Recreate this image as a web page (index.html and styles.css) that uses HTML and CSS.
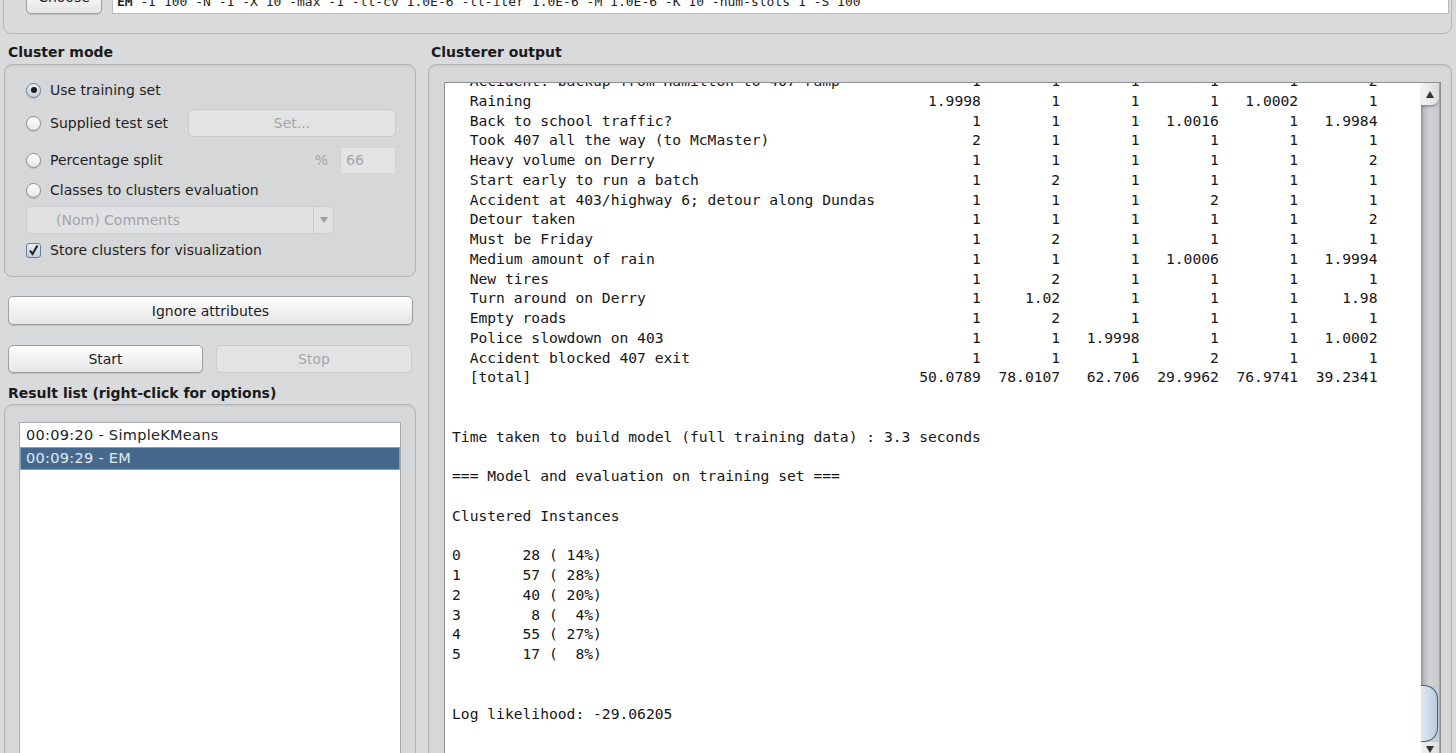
FILE: index.html
```html
<!DOCTYPE html>
<html>
<head>
<meta charset="utf-8">
<title>Weka Explorer - Cluster</title>
<link rel="stylesheet" href="styles.css">
</head>
<body>
<div class="app">
  <div class="topbox">
    <button class="btn choose">Choose</button>
    <div class="cmdfield"><b>EM</b> -I 100 -N -1 -X 10 -max -1 -ll-cv 1.0E-6 -ll-iter 1.0E-6 -M 1.0E-6 -K 10 -num-slots 1 -S 100</div>
  </div>
  <div class="main">
    <div class="left">
      <div class="title">Cluster mode</div>
      <div class="group mode">
        <div class="mrow r1"><span class="radio on"></span><span class="lbl">Use training set</span></div>
        <div class="mrow r2"><span class="opt"><span class="radio"></span><span class="lbl">Supplied test set</span></span><button class="btn dis setbtn">Set...</button></div>
        <div class="mrow r3"><span class="opt"><span class="radio"></span><span class="lbl">Percentage split</span></span><span class="pct"><span class="pctsign">%</span><span class="pctfield">66</span></span></div>
        <div class="mrow r4"><span class="radio"></span><span class="lbl">Classes to clusters evaluation</span></div>
        <div class="mrow r5"><div class="combo"><span class="combotext">(Nom) Comments</span><span class="comboarrow"><svg width="8" height="6" viewBox="0 0 8 6"><path d="M0 0 H8 L4 6 Z" fill="#9aa0a8"/></svg></span></div></div>
        <div class="mrow r6"><span class="check"><svg width="13" height="13" viewBox="0 0 13 13"><path d="M3 6.5 L5.5 10 L10.5 1.5" fill="none" stroke="#1c1c1c" stroke-width="2"/></svg></span><span class="lbl">Store clusters for visualization</span></div>
      </div>
      <button class="btn ignore">Ignore attributes</button>
      <div class="startstop">
        <button class="btn">Start</button>
        <button class="btn dis">Stop</button>
      </div>
      <div class="title rtitle">Result list (right-click for options)</div>
      <div class="group results">
        <div class="list">
          <div class="item">00:09:20 - SimpleKMeans</div>
          <div class="item sel">00:09:29 - EM</div>
        </div>
      </div>
    </div>
    <div class="right">
      <div class="title otitle">Clusterer output</div>
      <div class="group output">
        <div class="textarea">
          <div class="out">
            <div class="ln row"><span class="lab">Accident: backup from Hamilton to 407 ramp</span><span>1</span><span>1</span><span>1</span><span>1</span><span>1</span><span>2</span></div>
            <div class="ln row"><span class="lab">Raining</span><span>1.9998</span><span>1</span><span>1</span><span>1</span><span>1.0002</span><span>1</span></div>
            <div class="ln row"><span class="lab">Back to school traffic?</span><span>1</span><span>1</span><span>1</span><span>1.0016</span><span>1</span><span>1.9984</span></div>
            <div class="ln row"><span class="lab">Took 407 all the way (to McMaster)</span><span>2</span><span>1</span><span>1</span><span>1</span><span>1</span><span>1</span></div>
            <div class="ln row"><span class="lab">Heavy volume on Derry</span><span>1</span><span>1</span><span>1</span><span>1</span><span>1</span><span>2</span></div>
            <div class="ln row"><span class="lab">Start early to run a batch</span><span>1</span><span>2</span><span>1</span><span>1</span><span>1</span><span>1</span></div>
            <div class="ln row"><span class="lab">Accident at 403/highway 6; detour along Dundas</span><span>1</span><span>1</span><span>1</span><span>2</span><span>1</span><span>1</span></div>
            <div class="ln row"><span class="lab">Detour taken</span><span>1</span><span>1</span><span>1</span><span>1</span><span>1</span><span>2</span></div>
            <div class="ln row"><span class="lab">Must be Friday</span><span>1</span><span>2</span><span>1</span><span>1</span><span>1</span><span>1</span></div>
            <div class="ln row"><span class="lab">Medium amount of rain</span><span>1</span><span>1</span><span>1</span><span>1.0006</span><span>1</span><span>1.9994</span></div>
            <div class="ln row"><span class="lab">New tires</span><span>1</span><span>2</span><span>1</span><span>1</span><span>1</span><span>1</span></div>
            <div class="ln row"><span class="lab">Turn around on Derry</span><span>1</span><span>1.02</span><span>1</span><span>1</span><span>1</span><span>1.98</span></div>
            <div class="ln row"><span class="lab">Empty roads</span><span>1</span><span>2</span><span>1</span><span>1</span><span>1</span><span>1</span></div>
            <div class="ln row"><span class="lab">Police slowdown on 403</span><span>1</span><span>1</span><span>1.9998</span><span>1</span><span>1</span><span>1.0002</span></div>
            <div class="ln row"><span class="lab">Accident blocked 407 exit</span><span>1</span><span>1</span><span>1</span><span>2</span><span>1</span><span>1</span></div>
            <div class="ln row"><span class="lab">[total]</span><span>50.0789</span><span>78.0107</span><span>62.706</span><span>29.9962</span><span>76.9741</span><span>39.2341</span></div>
            <div class="ln"></div>
            <div class="ln"></div>
            <div class="ln">Time taken to build model (full training data) : 3.3 seconds</div>
            <div class="ln"></div>
            <div class="ln">=== Model and evaluation on training set ===</div>
            <div class="ln"></div>
            <div class="ln">Clustered Instances</div>
            <div class="ln"></div>
            <div class="ln">0       28 ( 14%)</div>
            <div class="ln">1       57 ( 28%)</div>
            <div class="ln">2       40 ( 20%)</div>
            <div class="ln">3        8 (  4%)</div>
            <div class="ln">4       55 ( 27%)</div>
            <div class="ln">5       17 (  8%)</div>
            <div class="ln"></div>
            <div class="ln"></div>
            <div class="ln">Log likelihood: -29.06205</div>
          </div>
          <div class="vscroll">
            <div class="sbtn up"><svg width="8" height="7" viewBox="0 0 8 7"><path d="M4 0 L8 7 H0 Z" fill="#333"/></svg></div>
            <div class="track">
              <div class="thumb"></div>
              <div class="sbtn down"><svg width="8" height="7" viewBox="0 0 8 7"><path d="M0 0 H8 L4 7 Z" fill="#333"/></svg></div>
            </div>
          </div>
        </div>
      </div>
    </div>
  </div>
</div>
</body>
</html>
```
FILE: styles.css
```css
* { box-sizing: border-box; }
html, body { margin: 0; padding: 0; }
body {
  background: #d9dadc;
  font-family: "DejaVu Sans", "Liberation Sans", sans-serif;
  font-size: 14px;
  color: #222;
}
.app {
  width: 1456px;
  height: 753px;
  overflow: hidden;
}
/* top options bar (scrolled partly out of view) */
.topbox {
  margin: -26px 4px 0 3px;
  height: 60px;
  border: 1px solid #b4b5b8;
  border-radius: 8px;
  display: flex;
  align-items: flex-end;
  gap: 10px;
  padding: 0 0 19px 22px;
}
.btn {
  font-family: "DejaVu Sans", "Liberation Sans", sans-serif;
  font-size: 14px;
  color: #1e1e1e;
  background: linear-gradient(#fefefe, #f1f1f1 50%, #e6e6e6);
  border: 1px solid #9e9ea0;
  border-radius: 5px;
  box-shadow: 0 1px 1px rgba(0,0,0,0.12);
  padding: 0;
  margin: 0;
}
.btn.dis {
  color: #a6a6a8;
  background: #e2e3e5;
  border-color: #cbcccf;
  box-shadow: none;
}
.choose {
  width: 76px;
  height: 28px;
  line-height: 14px;
  padding-bottom: 6px;
}
.cmdfield {
  flex: 1;
  height: 26px;
  background: #fff;
  border: 1px solid #b9babc;
  border-top: none;
  margin-right: 2px;
  padding: 7px 0 0 4px;
  font-family: "DejaVu Sans Mono", "Liberation Mono", monospace;
  font-size: 13px;
  line-height: 14px;
  white-space: nowrap;
  overflow: hidden;
  color: #1e1e1e;
}
.main {
  display: flex;
  gap: 12px;
  padding: 0 4px;
}
.left {
  width: 412px;
  display: flex;
  flex-direction: column;
}
.right {
  width: 1024px;
  display: flex;
  flex-direction: column;
}
.title {
  margin-top: 9px;
  height: 18px;
  line-height: 18px;
  font-weight: bold;
  font-size: 14px;
  padding-left: 4px;
  color: #1a1a1a;
}
.otitle { padding-left: 3px; }
.group {
  margin-top: 3px;
  border: 1px solid #b3b4b7;
  border-radius: 8px;
  background: #d6d7d9;
  box-shadow: inset 0 1px 2px rgba(0,0,0,0.08);
}
.mode {
  height: 213px;
  padding: 12px 19px 0 21px;
  display: flex;
  flex-direction: column;
}
.mrow {
  display: flex;
  align-items: center;
}
.r1 { height: 26px; }
.r2 { height: 28px; margin-top: 6px; justify-content: space-between; }
.r3 { height: 28px; margin-top: 9px; justify-content: space-between; }
.r4 { height: 24px; margin-top: 4px; }
.r5 { height: 28px; margin-top: 4px; }
.r6 { height: 22px; margin-top: 5px; }
.opt { display: flex; align-items: center; }
.lbl { margin-left: 9px; color: #1e1e1e; }
.radio {
  width: 15px;
  height: 15px;
  border-radius: 50%;
  border: 1px solid #8c8d90;
  background: linear-gradient(#ffffff, #e6e6e8);
  box-shadow: 0 1px 1px rgba(0,0,0,0.12);
  display: inline-flex;
  align-items: center;
  justify-content: center;
  flex: none;
}
.radio.on {
  border-color: #6d7f95;
  background: linear-gradient(#e9eff6, #c4d1df);
}
.radio.on::after {
  content: "";
  width: 6px;
  height: 6px;
  border-radius: 50%;
  background: #1b1b1b;
}
.setbtn {
  width: 208px;
  height: 28px;
}
.pct { display: flex; align-items: center; gap: 12px; }
.pctsign { color: #a5a6a8; }
.pctfield {
  width: 56px;
  height: 27px;
  background: #e3e4e6;
  border: 1px solid #d2d3d5;
  color: #a5a6a8;
  line-height: 25px;
  padding-left: 5px;
}
.combo {
  width: 308px;
  height: 28px;
  border: 1px solid #c9cacd;
  border-radius: 4px;
  background: #e0e1e3;
  display: flex;
  align-items: stretch;
}
.combotext {
  flex: 1;
  color: #a3a4a7;
  padding-left: 29px;
  line-height: 26px;
}
.comboarrow {
  width: 20px;
  border-left: 1px solid #c9cacd;
  display: flex;
  align-items: center;
  justify-content: center;
}
.check {
  width: 15px;
  height: 15px;
  border: 1px solid #6a7d96;
  border-radius: 3px;
  background: linear-gradient(#e8eef5, #bfcddc);
  display: inline-flex;
  align-items: center;
  justify-content: center;
  flex: none;
}
.ignore {
  margin: 19px 3px 0 4px;
  height: 29px;
}
.startstop {
  display: flex;
  gap: 13px;
  margin: 20px 4px 0 4px;
}
.startstop .btn {
  height: 28px;
  width: 195px;
}
.startstop .btn.dis { width: 196px; }
.rtitle { margin-top: 11px; }
.results {
  margin-top: 2px;
  height: 380px;
  padding: 17px 14px 0 14px;
}
.list {
  background: #fff;
  border: 1px solid #a9aaad;
  height: 360px;
  padding-top: 1px;
}
.item {
  height: 23px;
  line-height: 23px;
  padding-left: 6px;
  color: #222;
  font-size: 14.5px;
  letter-spacing: 0.3px;
}
.item.sel {
  background: #45698d;
  border: 1px solid #7aa2c8;
  color: #e4eaf0;
  line-height: 21px;
  padding-left: 5px;
}
.output {
  height: 720px;
  padding: 17px 10px 0 15px;
}
.textarea {
  height: 700px;
  background: #fff;
  border: 1px solid #8e8f92;
  display: flex;
  overflow: hidden;
}
.out {
  flex: 1;
  padding-left: 7px;
  margin-top: -12px;
  font-family: "DejaVu Sans Mono", "Liberation Mono", monospace;
  font-size: 14.65px;
  color: #161616;
}
.ln {
  height: 19.77px;
  line-height: 19.77px;
  white-space: pre;
}
.row {
  display: grid;
  grid-template-columns: 51ch repeat(6, 9ch);
}
.row span { text-align: right; }
.row .lab { text-align: left; padding-left: 2ch; }
.vscroll {
  width: 19px;
  display: flex;
  flex-direction: column;
  background: linear-gradient(to right, #8f9194 0, #b9bbbe 3px, #cfd1d4 45%, #c7c9cc 100%);
  border-right: 1px solid #a7a8ab;
}
.sbtn {
  height: 22px;
  display: flex;
  align-items: center;
  justify-content: center;
  background: linear-gradient(to right, #f2f2f3, #dcdde0);
  flex: none;
}
.sbtn.up {
  border-bottom-right-radius: 8px;
  box-shadow: 0 2px 2px rgba(0,0,0,0.25);
}
.track {
  flex: 1;
  display: flex;
  flex-direction: column;
  justify-content: flex-start;
  padding-top: 580px;
}
.thumb {
  height: 57px;
  flex: none;
  margin-right: 1px;
  border: 1.5px solid #4d5d70;
  border-left: none;
  border-radius: 0 14px 14px 0;
  background: linear-gradient(to right, #dfe9f3, #c8d9ea 60%, #b7cbe0);
}
.sbtn.down {
  height: 30px;
  align-items: flex-start;
  padding-top: 4px;
}
```
